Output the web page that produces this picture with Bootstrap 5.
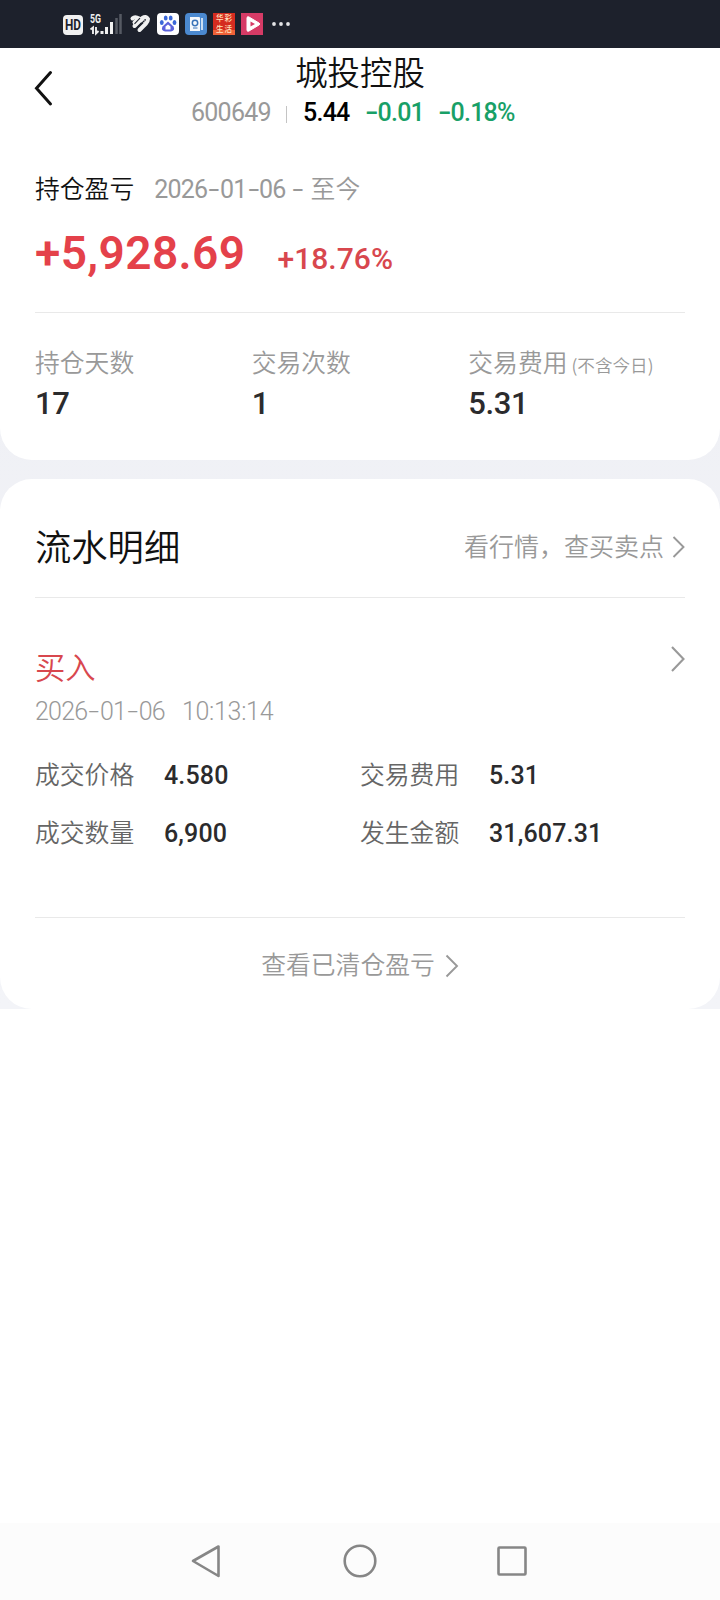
<!DOCTYPE html>
<html lang="zh-CN">
<head>
<meta charset="utf-8">
<meta name="viewport" content="width=device-width, initial-scale=1">
<title>城投控股</title>
<link href="https://cdn.jsdelivr.net/npm/bootstrap@5.3.0/dist/css/bootstrap.min.css" rel="stylesheet">
<style>
body{font-family:"Noto Sans CJK SC",sans-serif;font-weight:350;line-height:1;color:#111;background:#fff;min-height:1600px}
.phone{width:720px;height:1600px}
.status{height:48px;background:#1d212c}
.topbar{height:82px}
.back{width:65px;height:80px}
.name{font-size:32.4px;height:49px;padding-bottom:3px}
.quote{display:grid;grid-template-columns:95px 17px 62px 73px 80px;margin-left:191px;height:31px}
.num{font-family:Roboto,"Noto Sans CJK SC",sans-serif;font-size:25px;letter-spacing:-.75px;font-weight:400;white-space:nowrap}
.med{font-weight:500;color:#2b2b2d}
.dash{display:inline-block;width:.5em;text-align:center;transform:scaleX(1.55)}
.bar{width:1px;height:17px;background:#c4c4c4;margin-top:3px}
.muted{color:#999}
.dim{color:#666}
.green{color:#18a067;font-weight:500}
.red{color:#d8474e}
.sheet{padding:0 35px;background:#fff}
.band{background:linear-gradient(#eeeff4,#f3f4f8)}
.summary{height:330px;border-radius:0 0 32px 32px}
.flow{height:530px;border-radius:32px;margin-top:19px}
.rule{height:1px;background:#e9e9e9}
.lab{font-size:24.8px}
.gain{font-size:46px;font-weight:600;letter-spacing:.4px;color:#e4414a}
.rate{font-size:30px;font-weight:500;letter-spacing:.05px}
.stat .num{font-size:31px;letter-spacing:-.4px;padding-top:14px}
.stat .col-4{padding-top:12px}
.deal{display:grid;grid-template-columns:129px 196px 129px 1fr;height:58px}
.deal .lab{padding-bottom:3px}
.deal .num{letter-spacing:.15px}
.navbtns{height:77px;background:#fcfcfc}
svg{display:block}
</style>
</head>
<body>
<div class="phone d-flex flex-column">
  <div class="status">
    <svg width="310" height="48" viewBox="0 0 310 48">
      <rect x="63" y="15" width="20" height="20" rx="4" fill="#f1f1f1"/>
      <text x="73" y="30.3" text-anchor="middle" font-family="Roboto,sans-serif" font-weight="700" font-size="14.5" textLength="16" lengthAdjust="spacingAndGlyphs" fill="#1d212c">HD</text>
      <text x="90" y="22.5" font-family="Roboto,sans-serif" font-weight="700" font-size="12" textLength="11" lengthAdjust="spacingAndGlyphs" fill="#eee">5G</text>
      <path d="M90.500 29.500l2.500-2v6.500M96 27v6.500l2.500-2.500" fill="none" stroke="#eee" stroke-width="1.900"/>
      <path d="M102 34v-3M106.500 34v-7M111.500 34V22" stroke="#f1f1f1" stroke-width="3"/>
      <path d="M116.500 34V18M120.500 34V14" stroke="#565a63" stroke-width="2.500"/>
      <g fill="none" stroke="#f1f1f1" stroke-linecap="round" stroke-linejoin="round" stroke-width="4"><path d="M134.500 22.500L138 19"/><path d="M132.500 18.500Q135 16 139 18.500L143 21"/><path d="M134.500 26L142.500 18Q146 15.500 148 19Q148 21 146 23.500L139.500 30"/></g>
      <path d="M134.500 23.800L140 18.200M138 26.800L144.500 20.500" stroke="#1d212c" stroke-width="1.100"/>
      <rect x="157" y="13" width="22" height="22" rx="4" fill="#fff"/>
      <g fill="#3b68d8"><ellipse cx="161.800" cy="22.500" rx="1.900" ry="2.500"/><ellipse cx="165.700" cy="18" rx="1.900" ry="2.500"/><ellipse cx="170.700" cy="18" rx="1.900" ry="2.500"/><ellipse cx="174.500" cy="22.500" rx="1.900" ry="2.500"/></g>
      <path d="M168 21.500l5.500 5q2 4-2.500 5h-6q-4.500-1-2.500-5z" fill="#5b62dc"/>
      <path d="M165.500 29.500v-3l2.500-2 2.500 2v3z" fill="#fff"/>
      <rect x="185" y="13" width="22" height="22" rx="4" fill="#4b89d0"/>
      <path d="M190 17h9q1 0 1 1v13h-10z" fill="#f5f8fc"/><path d="M202 18v12" stroke="#dbe8f7" stroke-width="1.800"/>
      <circle cx="195" cy="23" r="2.700" fill="none" stroke="#3973b8" stroke-width="1.500"/><path d="M193 28h4.500" stroke="#3973b8"/>
      <rect x="213" y="13" width="22" height="22" fill="#d52c20"/><rect x="213" y="30" width="22" height="5" fill="#ee6138"/>
      <g fill="#ffe2bd" font-family="Noto Sans CJK SC,sans-serif" font-weight="500" font-size="7.500" text-anchor="middle"><text x="224" y="21" textLength="16">华彩</text><text x="224" y="32" textLength="16">生活</text></g>
      <rect x="241" y="13" width="22" height="22" fill="#d63b66"/>
      <path d="M247 18q0-2 2-1l10 6q1.500 1 0 2l-10 6q-2 1-2-1z" fill="#fff" stroke="#fff"/><path d="M250.500 21.500v5l4.500-2.500z" fill="#d63b66"/>
      <g fill="#e4e4e6"><circle cx="274" cy="24" r="1.900"/><circle cx="281" cy="24" r="1.900"/><circle cx="288" cy="24" r="1.900"/></g>
    </svg>
  </div>

  <header class="topbar position-relative">
    <svg class="back position-absolute top-0 start-0" viewBox="0 0 65 80"><path d="M50.500 24.500L36.500 40.300L50.500 56" fill="none" stroke="#111" stroke-width="3" stroke-linecap="round"/></svg>
    <div class="name d-flex align-items-center justify-content-center">城投控股</div>
    <div class="quote align-items-center">
      <span class="num muted">600649</span>
      <span class="bar"></span>
      <span class="num med text-black">5.44</span>
      <span class="num green"><span class="dash">-</span>0.01</span>
      <span class="num green"><span class="dash">-</span>0.18%</span>
    </div>
  </header>

  <main class="band">
    <section class="sheet summary">
      <div class="d-flex align-items-center pt-4" style="height:90px">
        <span class="lab">持仓盈亏</span>
        <span class="num muted ms-3 ps-1 pt-1">2026<span class="dash">-</span>01<span class="dash">-</span>06 <span class="dash">-</span></span><span class="lab muted" style="margin-left:7px">至今</span>
      </div>
      <div class="d-flex align-items-baseline" style="height:92px;padding-top:10px">
        <span class="num gain">+5,928.69</span>
        <span class="num rate red" style="margin-left:32px">+18.76%</span>
      </div>
      <div class="rule"></div>
      <div class="row g-0 stat pt-4">
        <div class="col-4"><div class="lab muted">持仓天数</div><div class="num med">17</div></div>
        <div class="col-4"><div class="lab muted">交易次数</div><div class="num med">1</div></div>
        <div class="col-4"><div class="lab muted text-nowrap">交易费用<small class="ms-1" style="font-size:17.6px">(不含今日)</small></div><div class="num med">5.31</div></div>
      </div>
    </section>

    <section class="sheet flow">
      <div class="d-flex align-items-center justify-content-between" style="height:118px;padding-top:14px">
        <span style="font-size:36.3px">流水明细</span>
        <span class="d-flex align-items-center muted"><span style="font-size:25px">看行情，查买卖点</span>
          <svg style="margin:3px 0 0 8px" width="13" height="24" viewBox="0 0 13 24"><path d="M1.500 2L11.500 12L1.500 22" fill="none" stroke="#999" stroke-width="1.900"/></svg></span>
      </div>
      <div class="rule"></div>
      <div class="d-flex justify-content-between" style="height:94px;padding-top:47px">
        <span class="red" style="font-size:30.3px;padding-top:6px">买入</span>
        <svg width="14" height="28" viewBox="0 0 14 28"><path d="M1 2L12.500 14L1 26" fill="none" stroke="#999" stroke-width="2.100"/></svg>
      </div>
      <div class="d-flex align-items-center" style="height:38px">
        <span class="num muted fw-light">2026<span class="dash">-</span>01<span class="dash">-</span>06</span>
        <span class="num muted fw-light" style="margin-left:17px;letter-spacing:-.3px">10:13:14</span>
      </div>
      <div class="deal align-items-center" style="margin-top:16px">
        <span class="lab dim">成交价格</span><span class="num med">4.580</span>
        <span class="lab dim">交易费用</span><span class="num med">5.31</span>
      </div>
      <div class="deal align-items-center">
        <span class="lab dim">成交数量</span><span class="num med">6,900</span>
        <span class="lab dim">发生金额</span><span class="num med">31,607.31</span>
      </div>
      <div class="rule" style="margin-top:55px"></div>
      <div class="d-flex align-items-center justify-content-center muted lab" style="height:91px">
        <span class="text-nowrap">查看已清仓盈亏</span>
        <svg width="14" height="24" viewBox="0 0 14 24" style="margin:4px 0 0 10px"><path d="M1.500 1.500L12 12L1.500 22.500" fill="none" stroke="#999" stroke-width="1.900"/></svg>
      </div>
    </section>
  </main>

  <nav class="navbtns mt-auto">
    <svg width="720" height="77" viewBox="0 0 720 77" fill="none" stroke="#868686" stroke-width="2.600" stroke-linejoin="round"><path d="M193 38L218.500 23.500V53z"/><circle cx="360" cy="38" r="15.300"/><rect x="498.500" y="24.500" width="27" height="27" rx="1"/></svg>
  </nav>
</div>
<script src="https://cdn.jsdelivr.net/npm/bootstrap@5.3.0/dist/js/bootstrap.bundle.min.js"></script>
</body>
</html>
